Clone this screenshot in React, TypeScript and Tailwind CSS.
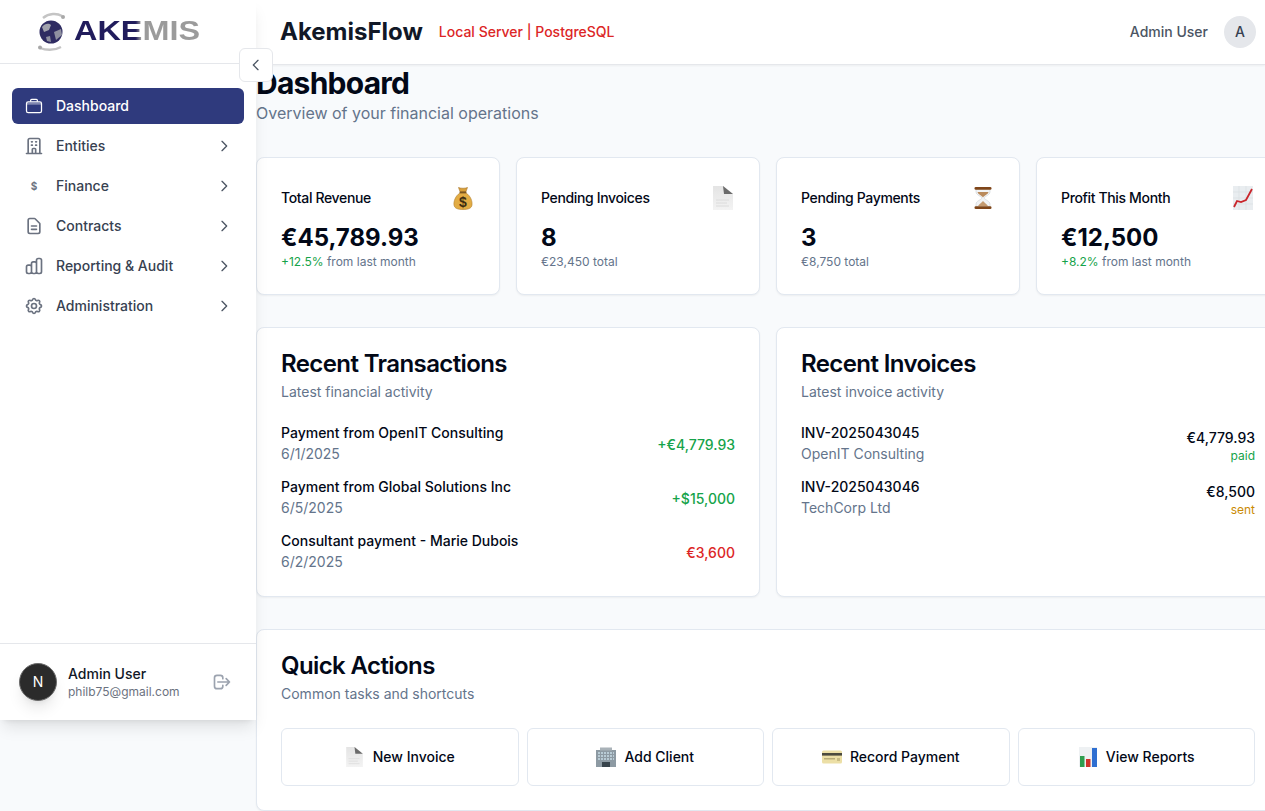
import { ReactNode } from 'react';
import {
  HiOutlineOfficeBuilding,
  HiOutlineDocumentText,
  HiOutlineChartBar,
  HiOutlineCog,
  HiOutlineLogout,
  HiOutlineChevronRight,
  HiOutlineChevronLeft,
} from 'react-icons/hi';

function CaseIcon() {
  return (
    <svg viewBox="0 0 24 24" fill="none" stroke="currentColor" strokeWidth="1.5" strokeLinejoin="round" className="w-5 h-5">
      <rect x="3" y="7" width="18" height="13" rx="2" />
      <path d="M8 7V5.2C8 4.5 8.5 4 9.2 4h5.6c.7 0 1.2.5 1.2 1.2V7" />
      <path d="M3 9.5h18" strokeWidth="0.8" />
    </svg>
  );
}

function MoneyBag() {
  return (
    <svg viewBox="0 0 20 24" className="w-5 h-6">
      <path d="M5.5 1.5 C7.5 2.5 12.5 2.5 14.5 1.5 L12.8 6 L7.2 6 Z" fill="#d8a03a" stroke="#a8742a" strokeWidth="0.6" />
      <path d="M7 7 C2 10 0.5 16 1 19 C1.5 22.5 5 23.5 10 23.5 C15 23.5 18.5 22.5 19 19 C19.5 16 18 10 13 7 Z" fill="#e2ac44" stroke="#b27f2e" strokeWidth="0.6" />
      <rect x="6.5" y="5.5" width="7" height="1.8" rx="0.9" fill="#7a5520" />
      <text x="10" y="20.5" textAnchor="middle" fontSize="14" fontWeight="700" fontFamily="Liberation Sans, sans-serif" fill="#3d2c10">$</text>
    </svg>
  );
}

function PageIcon({ idSuffix, small }: { idSuffix: string; small?: boolean }) {
  const fillId = `pageFill-${idSuffix}`;
  return (
    <svg viewBox="0 0 20 24" className={small ? 'w-[17px] h-5' : 'w-5 h-6'}>
      <defs>
        <linearGradient id={fillId} x1="0" y1="0" x2="0" y2="1">
          <stop offset="0" stopColor="#e4e4e4" />
          <stop offset="1" stopColor="#f3f3f3" />
        </linearGradient>
      </defs>
      <path d="M0 0 L10 0 L20 8 L20 24 L0 24 Z" fill={`url(#${fillId})`} />
      <path d="M10 0 L20 8 L11 8 Z" fill="#6b6b6b" />
      <path d="M3 14 H16 M3 17 H14 M3 20 H16" stroke="#dcdcdc" strokeWidth="1" />
    </svg>
  );
}

function Hourglass() {
  return (
    <svg viewBox="0 0 20 24" className="w-5 h-6">
      <path d="M3 3 L17 3 L17 6 C17 9 11.5 10.5 11 12 C11.5 13.5 17 15 17 18 L17 21 L3 21 L3 18 C3 15 8.5 13.5 9 12 C8.5 10.5 3 9 3 6 Z" fill="#f1f3f5" stroke="#c3c9ce" strokeWidth="0.5" />
      <path d="M4.5 6 L15.5 6 C15 8.5 11 9.5 10 11.5 C9 9.5 5 8.5 4.5 6 Z" fill="#b98a5c" />
      <path d="M5 20 C6.5 17.5 9 16.5 10 15 C11 16.5 13.5 17.5 15 20 Z" fill="#c49a70" />
      <rect x="1.5" y="1" width="17" height="2.8" rx="1.3" fill="#7f4519" />
      <rect x="1.5" y="20.2" width="17" height="2.8" rx="1.3" fill="#7f4519" />
    </svg>
  );
}

function TrendIcon() {
  return (
    <svg viewBox="0 0 20 24" className="w-5 h-6">
      <rect x="0" y="0" width="20" height="24" fill="#e9edf0" />
      <path d="M0 6 H20 M0 12 H20 M0 18 H20 M6 0 V24 M13 0 V24" stroke="#d8dde1" strokeWidth="0.6" />
      <path d="M1 21 L4 15 L8 16 L13 14 L19 3" fill="none" stroke="#c9252b" strokeWidth="1.8" />
    </svg>
  );
}

function OfficeIcon() {
  return (
    <svg viewBox="0 0 20 20" className="w-5 h-5">
      <rect x="0" y="3" width="20" height="17" fill="#8d9aa3" />
      <rect x="4" y="0.5" width="12" height="3" fill="#a9b2b8" />
      <path d="M2 6 H18 M2 9 H18 M2 12 H18" stroke="#c6dbe6" strokeWidth="1.6" strokeDasharray="2 1" />
      <rect x="6" y="15" width="8" height="5" fill="#37434b" />
    </svg>
  );
}

function CardIcon() {
  return (
    <svg viewBox="0 0 20 20" className="w-5 h-5">
      <rect x="0" y="3.5" width="20" height="13" rx="1.5" fill="#ecdfa6" />
      <rect x="0" y="6" width="20" height="2.6" fill="#4b4a3e" />
      <rect x="2" y="11" width="11" height="1.5" fill="#b9ad78" />
      <rect x="15" y="11" width="3" height="3" fill="#c9bc83" />
    </svg>
  );
}

function BarsIcon() {
  return (
    <svg viewBox="0 0 20 20" className="w-5 h-5">
      <rect x="1" y="0" width="18" height="20" fill="#eef1f3" />
      <rect x="2" y="9" width="4.5" height="11" fill="#2e9e4f" />
      <rect x="8" y="12" width="4.5" height="8" fill="#d0342c" />
      <rect x="14" y="1" width="5" height="19" fill="#2f6fd1" />
    </svg>
  );
}

function LogoGlobe() {
  return (
    <svg viewBox="0 0 32 40" className="w-8 h-10 shrink-0">
      <path d="M8 6 C14 1 22 1 27 4" fill="none" stroke="#c4c4c4" strokeWidth="2.4" />
      <circle cx="28" cy="5" r="2" fill="#a8a8a8" />
      <path d="M26 35 C19 39 10 38 5 36" fill="none" stroke="#c4c4c4" strokeWidth="2.4" />
      <circle cx="5" cy="35.5" r="2" fill="#a8a8a8" />
      <circle cx="16" cy="20" r="11.5" fill="#2f2c62" />
      <path d="M7 15 C10 11 14 11 16 13 L14 18 L9 20 Z" fill="#a2a3ad" />
      <path d="M19 20 L26 17 L27 23 L21 28 Z" fill="#8f90a0" />
      <path d="M11 25 L15 24 L16 30 L12 29 Z" fill="#8f90a0" />
    </svg>
  );
}

const navItems: { label: string; icon: ReactNode }[] = [
  { label: 'Entities', icon: <HiOutlineOfficeBuilding className="w-5 h-5" /> },
  { label: 'Finance', icon: <span className="text-[10px] font-bold">$</span> },
  { label: 'Contracts', icon: <HiOutlineDocumentText className="w-5 h-5" /> },
  { label: 'Reporting & Audit', icon: <HiOutlineChartBar className="w-5 h-5" /> },
  { label: 'Administration', icon: <HiOutlineCog className="w-5 h-5" /> },
];

const stats = [
  { title: 'Total Revenue', icon: <MoneyBag />, value: '€45,789.93', delta: '+12.5%', note: ' from last month' },
  { title: 'Pending Invoices', icon: <PageIcon idSuffix="stat" />, value: '8', delta: '', note: '€23,450 total' },
  { title: 'Pending Payments', icon: <Hourglass />, value: '3', delta: '', note: '€8,750 total' },
  { title: 'Profit This Month', icon: <TrendIcon />, value: '€12,500', delta: '+8.2%', note: ' from last month' },
];

const transactions = [
  { title: 'Payment from OpenIT Consulting', date: '6/1/2025', amount: '+€4,779.93', color: 'text-[#16a34a]' },
  { title: 'Payment from Global Solutions Inc', date: '6/5/2025', amount: '+$15,000', color: 'text-[#16a34a]' },
  { title: 'Consultant payment - Marie Dubois', date: '6/2/2025', amount: '€3,600', color: 'text-[#dc2626]' },
];

const invoices = [
  { id: 'INV-2025043045', client: 'OpenIT Consulting', amount: '€4,779.93', status: 'paid', color: 'text-[#16a34a]' },
  { id: 'INV-2025043046', client: 'TechCorp Ltd', amount: '€8,500', status: 'sent', color: 'text-[#ca8a04]' },
];

const actions = [
  { label: 'New Invoice', icon: <span className="flex w-5 justify-center"><PageIcon idSuffix="action" small /></span> },
  { label: 'Add Client', icon: <OfficeIcon /> },
  { label: 'Record Payment', icon: <CardIcon /> },
  { label: 'View Reports', icon: <BarsIcon /> },
];

function CardTitle({ title, sub }: { title: string; sub: string }) {
  return (
    <>
      <h3 className="text-2xl font-semibold leading-none tracking-tight">{title}</h3>
      <p className="mt-1.5 text-sm text-[#64748b]">{sub}</p>
    </>
  );
}

export default function App() {
  return (
    <div className="relative flex h-screen overflow-hidden bg-[#f8fafc] text-[#020817] font-['Inter',sans-serif]">
      <aside className="relative z-10 flex h-[720px] w-64 shrink-0 flex-col bg-white shadow-lg">
        <div className="flex h-16 items-center border-b border-[#e5e7eb] pl-[35px]">
          <LogoGlobe />
          <span className="ml-[7px] inline-block origin-left scale-x-[1.2] bg-[linear-gradient(90deg,#211c5c_49%,#9b9b9b_53%)] bg-clip-text font-['Liberation_Sans',sans-serif] text-[27px] font-bold leading-none text-transparent">
            AKEMIS
          </span>
        </div>
        <nav className="flex-1 px-3 pt-6 space-y-1">
          <a className="flex h-9 items-center gap-3 rounded-md bg-[#2f3a7d] px-3 text-sm font-medium text-white">
            <CaseIcon />
            Dashboard
          </a>
          {navItems.map((item) => (
            <a key={item.label} className="flex h-9 items-center gap-3 rounded-md px-3 text-sm font-medium text-[#374151]">
              <span className="flex w-5 h-5 items-center justify-center text-[#6b7280]">{item.icon}</span>
              <span className="flex-1">{item.label}</span>
              <HiOutlineChevronRight className="w-4 h-4 text-[#4b5563]" />
            </a>
          ))}
        </nav>
        <div className="flex h-[77px] items-center gap-[11px] border-t border-[#e5e7eb] pl-[19px] pr-6">
          <div className="flex w-[38px] h-[38px] items-center justify-center rounded-full border border-[#6b6b6b] bg-[#2b2b2b] text-sm font-normal text-white shadow-lg">N</div>
          <div className="flex-1 min-w-0">
            <div className="text-sm font-medium leading-5 text-[#111827]">Admin User</div>
            <div className="text-xs leading-4 text-[#6b7280]">philb75@gmail.com</div>
          </div>
          <HiOutlineLogout className="w-5 h-5 text-[#9ca3af]" />
        </div>
      </aside>

      <button className="absolute left-[239px] top-[48px] z-20 flex w-[34px] h-[34px] items-center justify-center rounded-md border border-[#e5e7eb] bg-white text-[#4b5563]">
        <HiOutlineChevronLeft className="w-4 h-4" />
      </button>

      <div className="flex min-w-0 flex-1 flex-col">
        <header className="flex h-[65px] shrink-0 items-center justify-between border-b border-[#e5e7eb] bg-white pl-6 pr-[9px] shadow-xs">
          <div className="flex items-center gap-4">
            <h1 className="text-2xl font-bold text-[#111827]">AkemisFlow</h1>
            <span className="text-sm font-medium text-[#dc2626]">Local Server | PostgreSQL</span>
          </div>
          <div className="flex items-center gap-4">
            <span className="text-sm font-medium text-[#4b5563]">Admin User</span>
            <div className="flex w-8 h-8 items-center justify-center rounded-full bg-[#e5e7eb] text-sm font-medium text-[#374151]">A</div>
          </div>
        </header>

        <main className="w-[1024px] shrink-0">
          <h2 className="text-3xl font-bold tracking-tight">Dashboard</h2>
          <p className="text-[#64748b]">Overview of your financial operations</p>

          <div className="mt-8 grid grid-cols-4 gap-4">
            {stats.map((s) => (
              <div key={s.title} className="rounded-lg border border-[#e2e8f0] bg-white shadow-xs">
                <div className="flex items-center justify-between pl-6 pr-[26px] pt-6 pb-2 h-[64px]">
                  <span className="text-sm font-medium tracking-tight">{s.title}</span>
                  {s.icon}
                </div>
                <div className="px-6 pb-6">
                  <div className="text-2xl font-bold">{s.value}</div>
                  <p className="text-xs text-[#64748b]">
                    {s.delta && <span className="text-[#16a34a]">{s.delta}</span>}
                    {s.note}
                  </p>
                </div>
              </div>
            ))}
          </div>

          <div className="mt-8 grid grid-cols-2 gap-4">
            <div className="h-[270px] rounded-lg border border-[#e2e8f0] bg-white p-6 shadow-xs">
              <CardTitle title="Recent Transactions" sub="Latest financial activity" />
              <div className="mt-5 space-y-3">
                {transactions.map((t) => (
                  <div key={t.title} className="flex h-[42px] items-center justify-between">
                    <div>
                      <p className="text-sm font-medium">{t.title}</p>
                      <p className="mt-px text-sm text-[#64748b]">{t.date}</p>
                    </div>
                    <span className={`pt-1 text-sm font-medium ${t.color}`}>{t.amount}</span>
                  </div>
                ))}
              </div>
            </div>
            <div className="h-[270px] rounded-lg border border-[#e2e8f0] bg-white p-6 shadow-xs">
              <CardTitle title="Recent Invoices" sub="Latest invoice activity" />
              <div className="mt-5 space-y-3">
                {invoices.map((inv) => (
                  <div key={inv.id} className="flex h-[42px] items-center justify-between">
                    <div>
                      <p className="text-sm font-medium">{inv.id}</p>
                      <p className="mt-px text-sm text-[#64748b]">{inv.client}</p>
                    </div>
                    <div className="pt-1.5 text-right">
                      <p className="text-sm font-medium">{inv.amount}</p>
                      <p className={`text-xs ${inv.color}`}>{inv.status}</p>
                    </div>
                  </div>
                ))}
              </div>
            </div>
          </div>

          <div className="mt-8 rounded-lg border border-[#e2e8f0] bg-white p-6 shadow-xs">
            <CardTitle title="Quick Actions" sub="Common tasks and shortcuts" />
            <div className="mt-6 grid grid-cols-4 gap-2">
              {actions.map((a) => (
                <button key={a.label} className="flex h-[58px] items-center justify-center gap-2 rounded-md border border-[#e2e8f0] bg-white text-sm font-medium">
                  {a.icon}
                  {a.label}
                </button>
              ))}
            </div>
          </div>
        </main>
      </div>
    </div>
  );
}
